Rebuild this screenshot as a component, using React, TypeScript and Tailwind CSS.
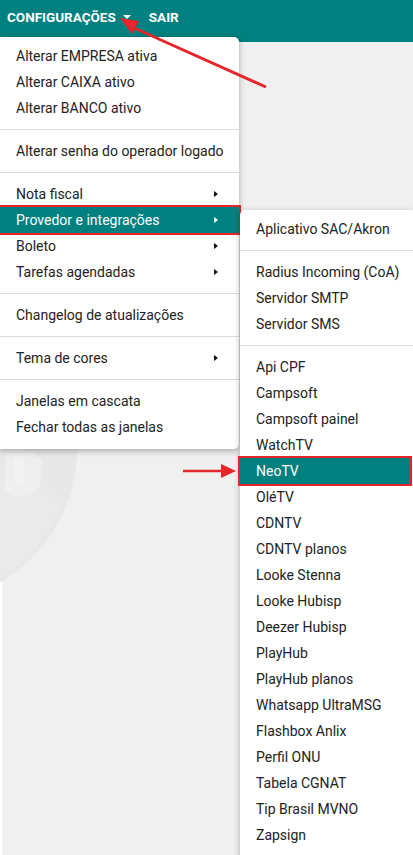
import React from "react";

const Arrow = ({ white }: { white?: boolean }) => (
  <span
    className={
      "inline-block w-0 h-0 border-y-[3.5px] border-y-transparent border-l-[4px] " +
      (white ? "border-l-white" : "border-l-[#111]")
    }
  />
);

type Item = { label: string; sub?: boolean; active?: boolean } | "sep";

const mainItems: Item[] = [
  { label: "Alterar EMPRESA ativa" },
  { label: "Alterar CAIXA ativo" },
  { label: "Alterar BANCO ativo" },
  "sep",
  { label: "Alterar senha do operador logado" },
  "sep",
  { label: "Nota fiscal", sub: true },
  { label: "Provedor e integrações", sub: true, active: true },
  { label: "Boleto", sub: true },
  { label: "Tarefas agendadas", sub: true },
  "sep",
  { label: "Changelog de atualizações" },
  "sep",
  { label: "Tema de cores", sub: true },
  "sep",
  { label: "Janelas em cascata" },
  { label: "Fechar todas as janelas" },
];

const subItems: Item[] = [
  { label: "Aplicativo SAC/Akron" },
  "sep",
  { label: "Radius Incoming (CoA)" },
  { label: "Servidor SMTP" },
  { label: "Servidor SMS" },
  "sep",
  { label: "Api CPF" },
  { label: "Campsoft" },
  { label: "Campsoft painel" },
  { label: "WatchTV" },
  { label: "NeoTV", active: true },
  { label: "OléTV" },
  { label: "CDNTV" },
  { label: "CDNTV planos" },
  { label: "Looke Stenna" },
  { label: "Looke Hubisp" },
  { label: "Deezer Hubisp" },
  { label: "PlayHub" },
  { label: "PlayHub planos" },
  { label: "Whatsapp UltraMSG" },
  { label: "Flashbox Anlix" },
  { label: "Perfil ONU" },
  { label: "Tabela CGNAT" },
  { label: "Tip Brasil MVNO" },
  { label: "Zapsign" },
];

function MenuList({ items, sub }: { items: Item[]; sub?: boolean }) {
  return (
    <>
      {items.map((it, i) =>
        it === "sep" ? (
          <div key={i} className="my-[8px] h-px bg-[#dcdcdc]" />
        ) : (
          <div
            key={i}
            className={
              "relative h-[26px] flex items-center justify-between pl-4 pr-[21px] text-[14px] whitespace-nowrap " +
              (it.active ? "bg-[#00807f] text-white " : "text-[#222] ") +
              (it.active && sub ? "mr-[3px]" : "")
            }
          >
            <span>{it.label}</span>
            {it.sub && <Arrow white={it.active} />}
            {it.active && (
              <span className="absolute -left-[2px] -right-[2px] -top-[2px] -bottom-[2px] border-[2.5px] border-[#e4262a]" />
            )}
          </div>
        )
      )}
    </>
  );
}

export default function App() {
  return (
    <div className="relative w-[413px] h-[855px] overflow-hidden bg-[#f0f0f0] font-['Roboto',sans-serif]">
      <div className="h-[42px] bg-[#00807f] flex items-center pl-[7px] gap-[18px] text-white font-bold text-[13.5px] pb-[8px]">
        <div className="flex items-center gap-[7px]">
          <span>CONFIGURAÇÕES</span>
          <span className="w-0 h-0 border-x-[4px] border-x-transparent border-t-[4px] border-t-white" />
        </div>
        <span>SAIR</span>
      </div>
      <div className="absolute left-0 top-[42px] bottom-0 w-[2px] bg-white" />

      {/* watermark */}
      <svg className="absolute left-0 top-[290px]" width="160" height="320" viewBox="0 290 160 320">
        <circle cx="-75" cy="450" r="152" fill="#e8e8e8" />
        <path d="M -75 450 L 63 500 A 152 152 0 0 1 -75 602 Z" fill="#eaeaea" />
        <rect x="14" y="455" width="10" height="30" rx="5" fill="#f3f3f3" />
        <path d="M 5 450 A 40 40 0 0 1 42 460 L 42 480 A 22 22 0 0 1 5 490 Z" fill="#f1f1f1" opacity="0.6" />
      </svg>

      {/* main dropdown */}
      <div className="absolute left-0 top-[37px] w-[239px] bg-white rounded-r-[5px] shadow-[0_2px_6px_rgba(0,0,0,0.3)] pt-[6px] pb-[9px]">
        <MenuList items={mainItems} />
      </div>

      {/* submenu */}
      <div className="absolute left-[240px] top-[210px] w-[173px] h-[660px] bg-white rounded-l-[5px] shadow-[0_2px_6px_rgba(0,0,0,0.3)] pt-[6px]">
        <MenuList items={subItems} sub />
      </div>

      {/* annotation arrows */}
      <svg className="absolute left-0 top-0 pointer-events-none" width="413" height="855">
        <line x1="266" y1="87" x2="132" y2="27" stroke="#e4262a" strokeWidth="3" />
        <polygon points="120,18 139,21 132,34" fill="#e4262a" />
        <line x1="183" y1="471" x2="224" y2="471" stroke="#e4262a" strokeWidth="2.5" />
        <polygon points="236,471 221,464 221,478" fill="#e4262a" />
      </svg>
    </div>
  );
}
